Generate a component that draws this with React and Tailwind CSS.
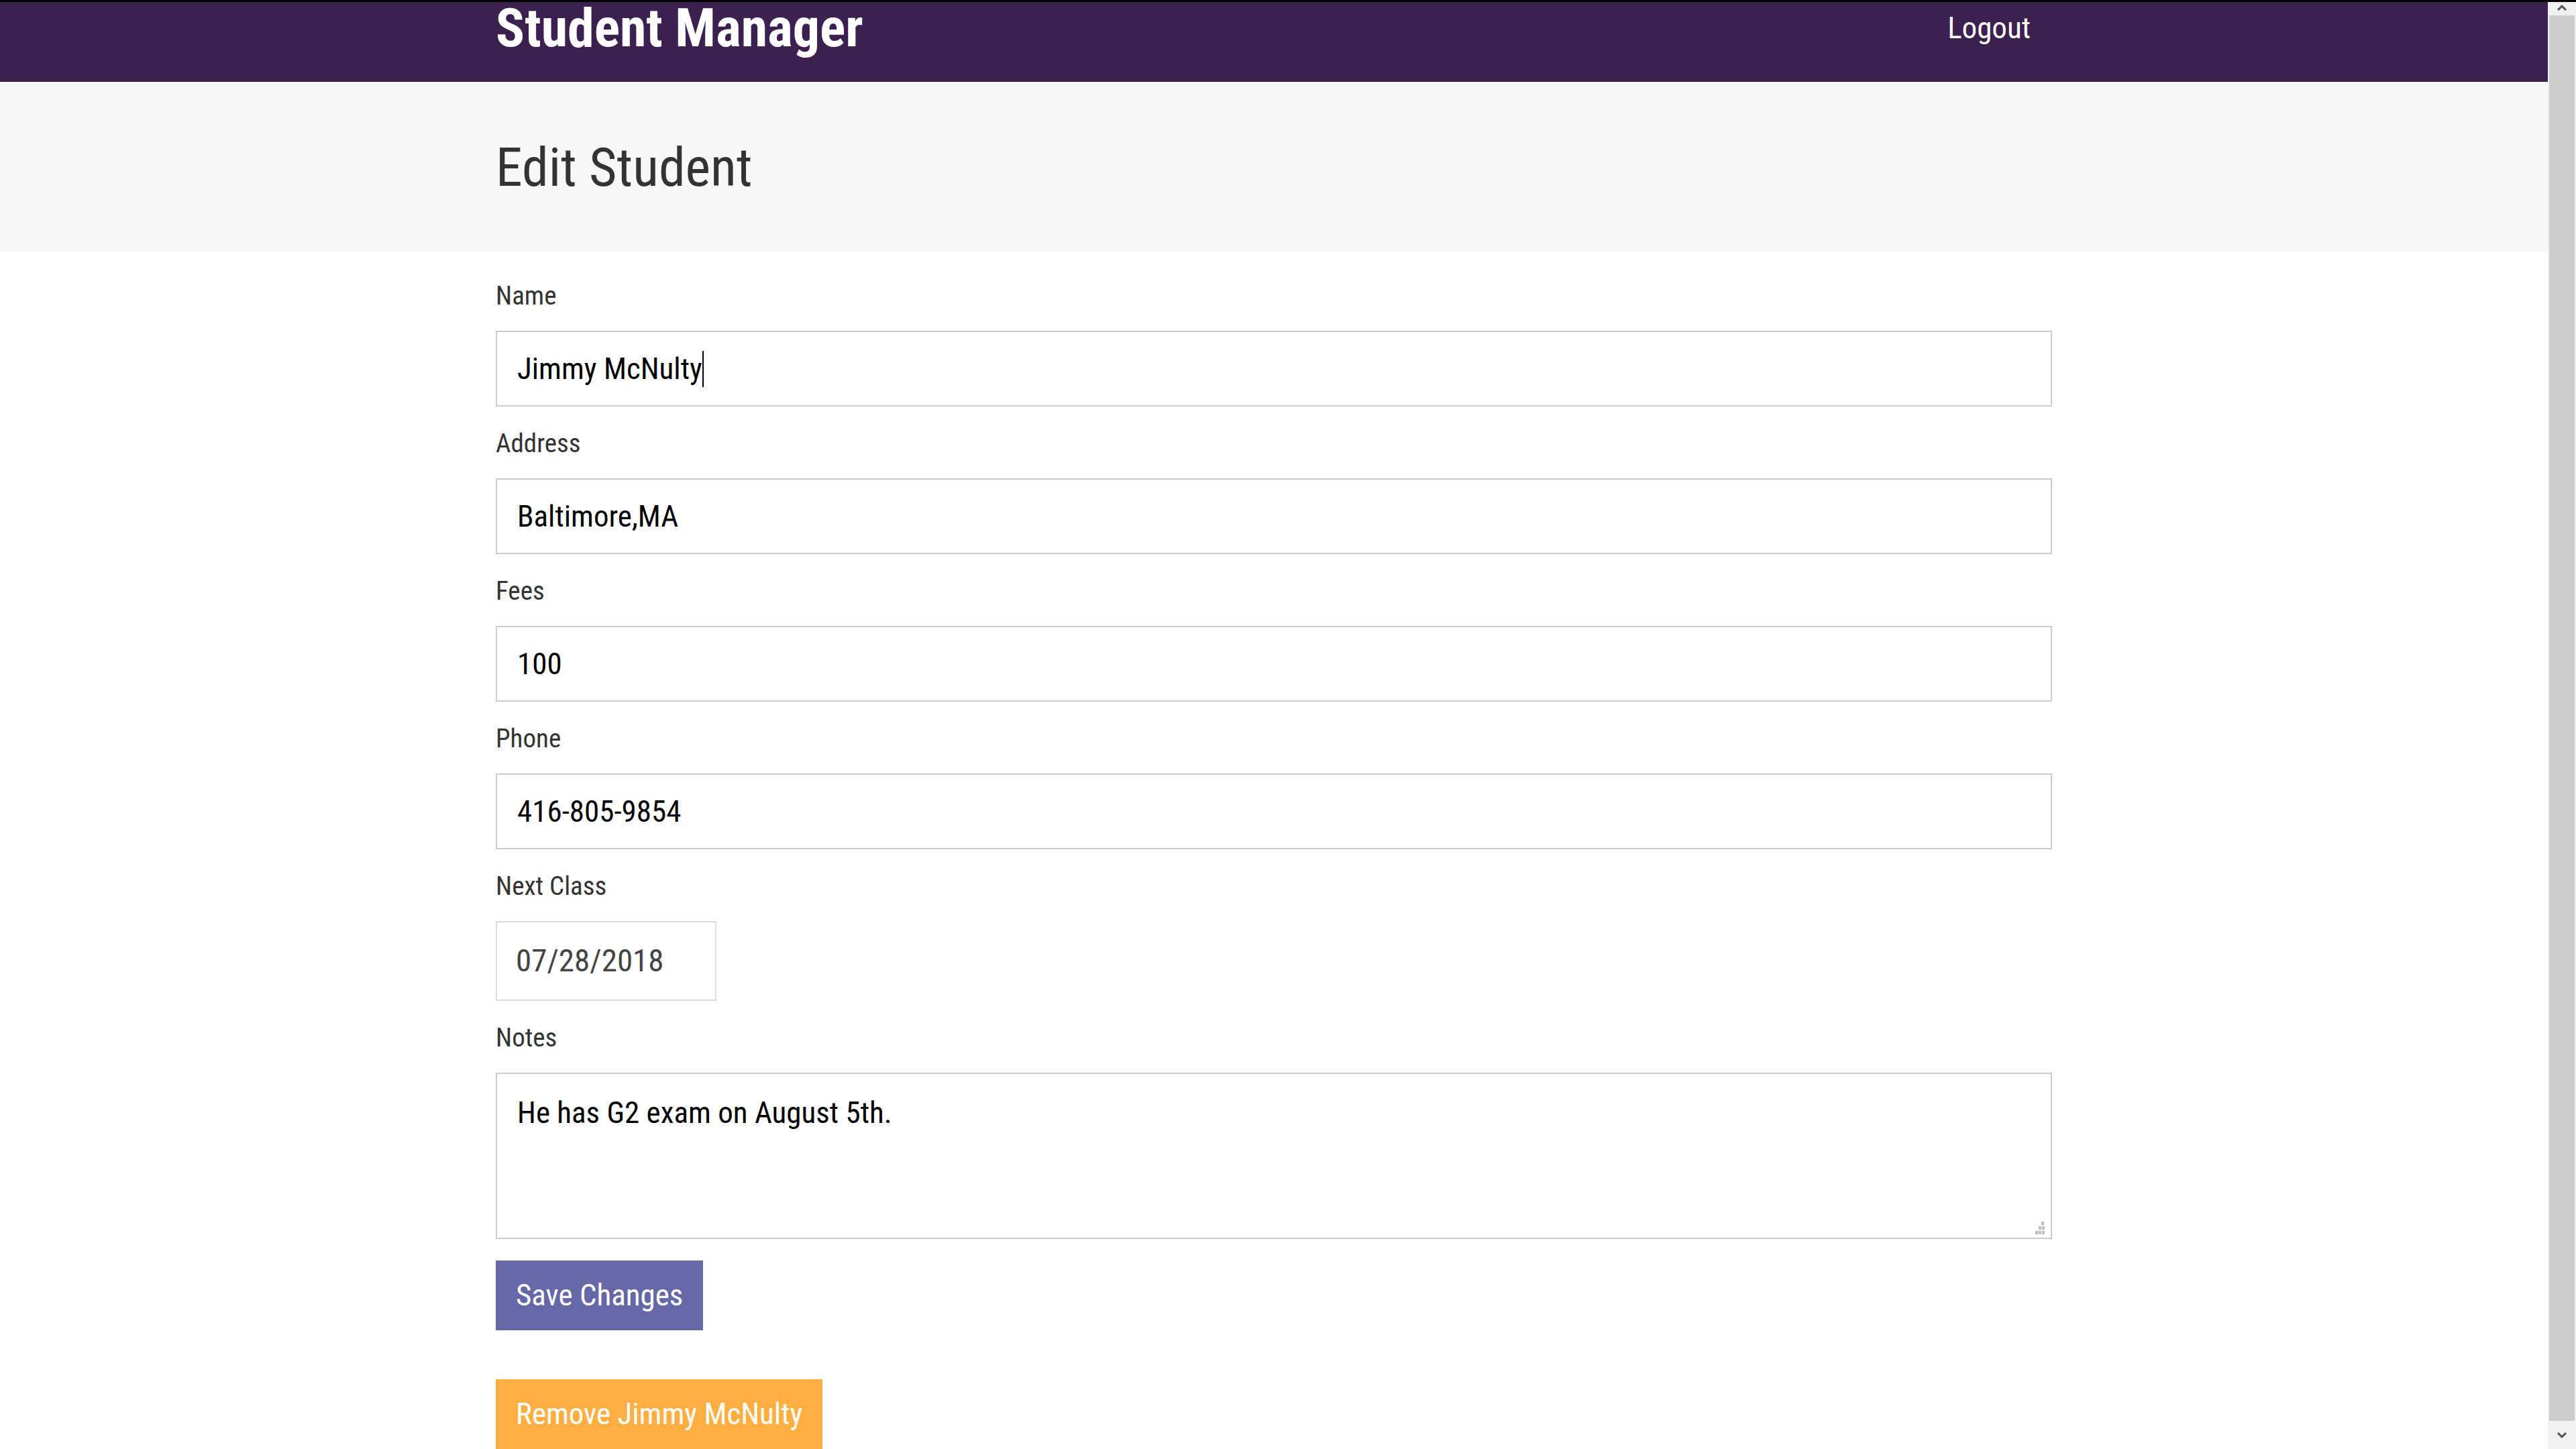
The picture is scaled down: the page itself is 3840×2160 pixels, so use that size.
import React from "react";

const FONT = "font-['Roboto_Condensed','Liberation_Sans_Narrow','Arial_Narrow','DejaVu_Sans_Condensed',Roboto,sans-serif]";

// text box that looks like a form input
function Field({ label, value, caret, narrow }) {
  return (
    <div className="mb-[38px]">
      <label className="block text-[39px] leading-[35px] text-[#333] mb-[34px]">{label}</label>
      <div
        className={
          narrow
            ? "w-[329px] h-[119px] border-2 border-[#dcdcdc] flex items-center px-[28px] text-[47px] text-[#444]"
            : "w-full h-[113px] border-2 border-[#cccccc] flex items-center px-[30px] text-[45px] text-black"
        }
      >
        <span className="whitespace-pre">{value}</span>
        {caret && <span className="inline-block w-[2px] h-[54px] bg-black" />}
      </div>
    </div>
  );
}

function ResizeGrip() {
  return (
    <svg width="20" height="20" viewBox="0 0 20 20" className="absolute right-[8px] bottom-[5px]">
      <g fill="#bdbdbd">
        <rect x="14" y="1" width="4" height="5" />
        <rect x="10" y="8" width="4" height="5" />
        <rect x="15" y="8" width="4" height="5" />
        <rect x="5" y="15" width="4" height="5" />
        <rect x="10" y="15" width="4" height="5" />
        <rect x="15" y="15" width="4" height="5" />
      </g>
    </svg>
  );
}

export default function App() {
  return (
    <div className={`h-[2160px] overflow-hidden flex flex-col bg-white ${FONT}`}>
      <div className="h-[3px] bg-black shrink-0" />
      <div className="flex flex-1 min-h-0">
        <div className="flex-1 min-w-0">
          {/* --- Navbar --- */}
          <header className="h-[119px] bg-[#3b2050] overflow-hidden">
            <div className="w-[2320px] mx-auto flex justify-between items-start">
              <h1 className="text-[80px] leading-[80px] font-bold text-white -mt-[1px]">Student Manager</h1>
              <a className="text-[45px] leading-[45px] text-white mt-[16px] mr-[32px]">Logout</a>
            </div>
          </header>

          {/* --- Page title --- */}
          <section className="h-[253px] bg-[#f7f7f7]">
            <div className="w-[2320px] mx-auto pt-[88px]">
              <h2 className="text-[80px] leading-[80px] text-[#333]">Edit Student</h2>
            </div>
          </section>

          {/* --- Form --- */}
          <main className="w-[2320px] mx-auto pt-[49px]">
            <Field label="Name" value="Jimmy McNulty" caret />
            <Field label="Address" value="Baltimore,MA" />
            <Field label="Fees" value="100" />
            <Field label="Phone" value="416-805-9854" />
            <Field label="Next Class" value="07/28/2018" narrow />

            <div>
              <label className="block text-[39px] leading-[35px] text-[#333] mb-[34px]">Notes</label>
              <div className="relative h-[248px] border-2 border-[#cccccc] px-[30px] pt-[24px] text-[45px] leading-[67px] text-black">
                He has G2 exam on August 5th.
                <ResizeGrip />
              </div>
            </div>

            <button className="mt-[32px] block h-[104px] px-[30px] bg-[#6667a6] text-white text-[45px]">
              Save Changes
            </button>
            <button className="mt-[73px] block h-[104px] px-[30px] bg-[#ffae42] text-white text-[45px]">
              Remove Jimmy McNulty
            </button>
          </main>
        </div>

        {/* --- Scrollbar --- */}
        <aside className="w-[42px] shrink-0 bg-[#f1f1f1] flex flex-col items-center">
          <svg width="16" height="20" viewBox="0 0 16 20" className="shrink-0">
            <polyline points="2,12 8,6 14,12" fill="none" stroke="#505050" strokeWidth="3" />
          </svg>
          <div className="w-[38px] flex-1 bg-[#cdcdcd]" />
          <svg width="16" height="42" viewBox="0 0 16 42" className="shrink-0">
            <polyline points="2,18 8,24 14,18" fill="none" stroke="#505050" strokeWidth="3" />
          </svg>
        </aside>
      </div>
    </div>
  );
}
